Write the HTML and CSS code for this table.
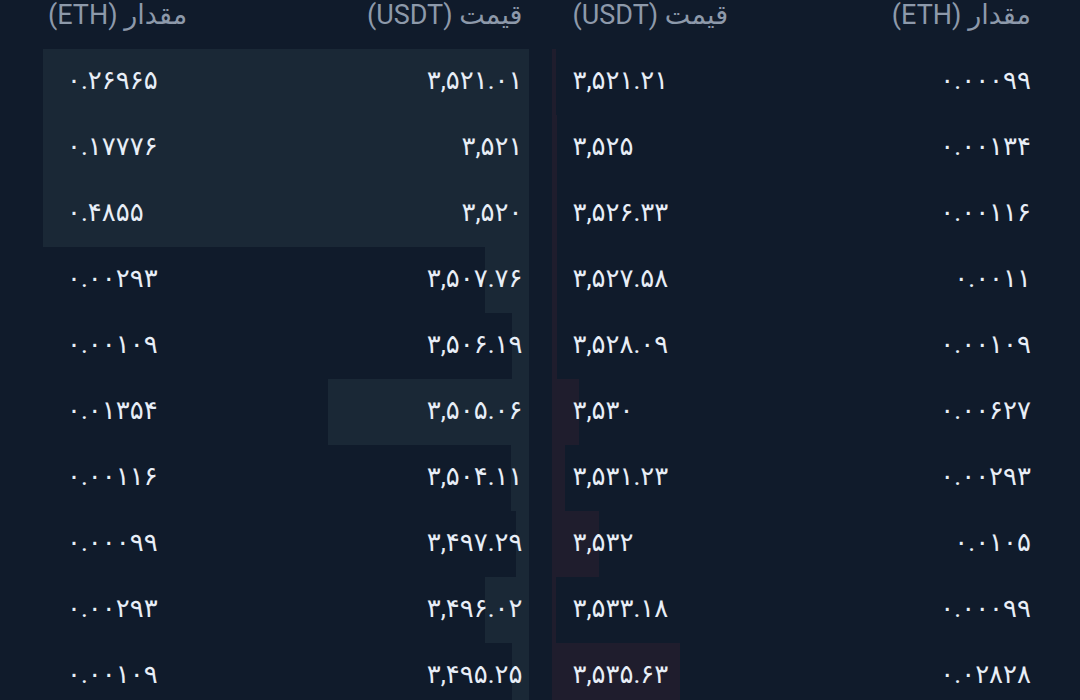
FILE: index.html
```html
<!DOCTYPE html>
<html lang="fa">
<head>
<meta charset="utf-8">
<link rel="stylesheet" href="styles.css">
</head>
<body>
<div class="book">
  <section class="side bids">
    <div class="head">
      <span class="col-amount" dir="rtl">مقدار (ETH)</span>
      <span class="col-price" dir="rtl">قیمت (USDT)</span>
    </div>
    <div class="row"><i class="bar" style="width:486px"></i><span class="amount">۰.۲۶۹۶۵</span><span class="price">۳,۵۲۱.۰۱</span></div>
    <div class="row"><i class="bar" style="width:486px"></i><span class="amount">۰.۱۷۷۷۶</span><span class="price">۳,۵۲۱</span></div>
    <div class="row"><i class="bar" style="width:486px"></i><span class="amount">۰.۴۸۵۵</span><span class="price">۳,۵۲۰</span></div>
    <div class="row"><i class="bar" style="width:44px"></i><span class="amount">۰.۰۰۲۹۳</span><span class="price">۳,۵۰۷.۷۶</span></div>
    <div class="row"><i class="bar" style="width:17px"></i><span class="amount">۰.۰۰۱۰۹</span><span class="price">۳,۵۰۶.۱۹</span></div>
    <div class="row"><i class="bar" style="width:201px"></i><span class="amount">۰.۰۱۳۵۴</span><span class="price">۳,۵۰۵.۰۶</span></div>
    <div class="row"><i class="bar" style="width:18px"></i><span class="amount">۰.۰۰۱۱۶</span><span class="price">۳,۵۰۴.۱۱</span></div>
    <div class="row"><i class="bar" style="width:13px"></i><span class="amount">۰.۰۰۰۹۹</span><span class="price">۳,۴۹۷.۲۹</span></div>
    <div class="row"><i class="bar" style="width:44px"></i><span class="amount">۰.۰۰۲۹۳</span><span class="price">۳,۴۹۶.۰۲</span></div>
    <div class="row"><i class="bar" style="width:17px"></i><span class="amount">۰.۰۰۱۰۹</span><span class="price">۳,۴۹۵.۲۵</span></div>
  </section>
  <section class="side asks">
    <div class="head">
      <span class="col-price" dir="rtl">قیمت (USDT)</span>
      <span class="col-amount" dir="rtl">مقدار (ETH)</span>
    </div>
    <div class="row"><i class="bar" style="width:4px"></i><span class="price">۳,۵۲۱.۲۱</span><span class="amount">۰.۰۰۰۹۹</span></div>
    <div class="row"><i class="bar" style="width:5px"></i><span class="price">۳,۵۲۵</span><span class="amount">۰.۰۰۱۳۴</span></div>
    <div class="row"><i class="bar" style="width:5px"></i><span class="price">۳,۵۲۶.۳۳</span><span class="amount">۰.۰۰۱۱۶</span></div>
    <div class="row"><i class="bar" style="width:5px"></i><span class="price">۳,۵۲۷.۵۸</span><span class="amount">۰.۰۰۱۱</span></div>
    <div class="row"><i class="bar" style="width:5px"></i><span class="price">۳,۵۲۸.۰۹</span><span class="amount">۰.۰۰۱۰۹</span></div>
    <div class="row"><i class="bar" style="width:27px"></i><span class="price">۳,۵۳۰</span><span class="amount">۰.۰۰۶۲۷</span></div>
    <div class="row"><i class="bar" style="width:13px"></i><span class="price">۳,۵۳۱.۲۳</span><span class="amount">۰.۰۰۲۹۳</span></div>
    <div class="row"><i class="bar" style="width:47px"></i><span class="price">۳,۵۳۲</span><span class="amount">۰.۰۱۰۵</span></div>
    <div class="row"><i class="bar" style="width:4px"></i><span class="price">۳,۵۳۳.۱۸</span><span class="amount">۰.۰۰۰۹۹</span></div>
    <div class="row"><i class="bar" style="width:128px"></i><span class="price">۳,۵۳۵.۶۳</span><span class="amount">۰.۰۲۸۲۸</span></div>
  </section>
</div>
</body>
</html>
```

FILE: styles.css
```css
html, body {
  margin: 0;
  padding: 0;
  background: #101b2b;
  height: 700px;
  overflow: hidden;
}

body {
  font-family: Roboto, "DejaVu Sans", sans-serif;
  color: #e8eef7;
}

.book {
  display: flex;
  gap: 23px;
  padding: 0 44px;
}

.side {
  flex: 1;
  display: flex;
  flex-direction: column;
}

.head {
  height: 49px;
  display: flex;
  justify-content: space-between;
  align-items: flex-start;
  font-size: 27px;
  line-height: 30px;
  color: #8d99aa;
}

.bids .head {
  padding: 0 6px 0 4px;
}

.asks .head {
  padding: 0 5px 0 21px;
}

.row {
  position: relative;
  height: 66px;
  flex: none;
  display: flex;
  justify-content: space-between;
  align-items: center;
  font-size: 26px;
  direction: ltr;
}

.bids .row {
  padding: 0 6px 0 23px;
}

.asks .row {
  padding: 0 5px 0 21px;
}

.row span {
  position: relative;
  top: -2px;
}

.bar {
  position: absolute;
  top: 0;
  bottom: 0;
}

.bids .bar {
  right: 0;
  background: #1a2836;
}

.asks .bar {
  left: 0;
  background: #1f1d2d;
}
```
